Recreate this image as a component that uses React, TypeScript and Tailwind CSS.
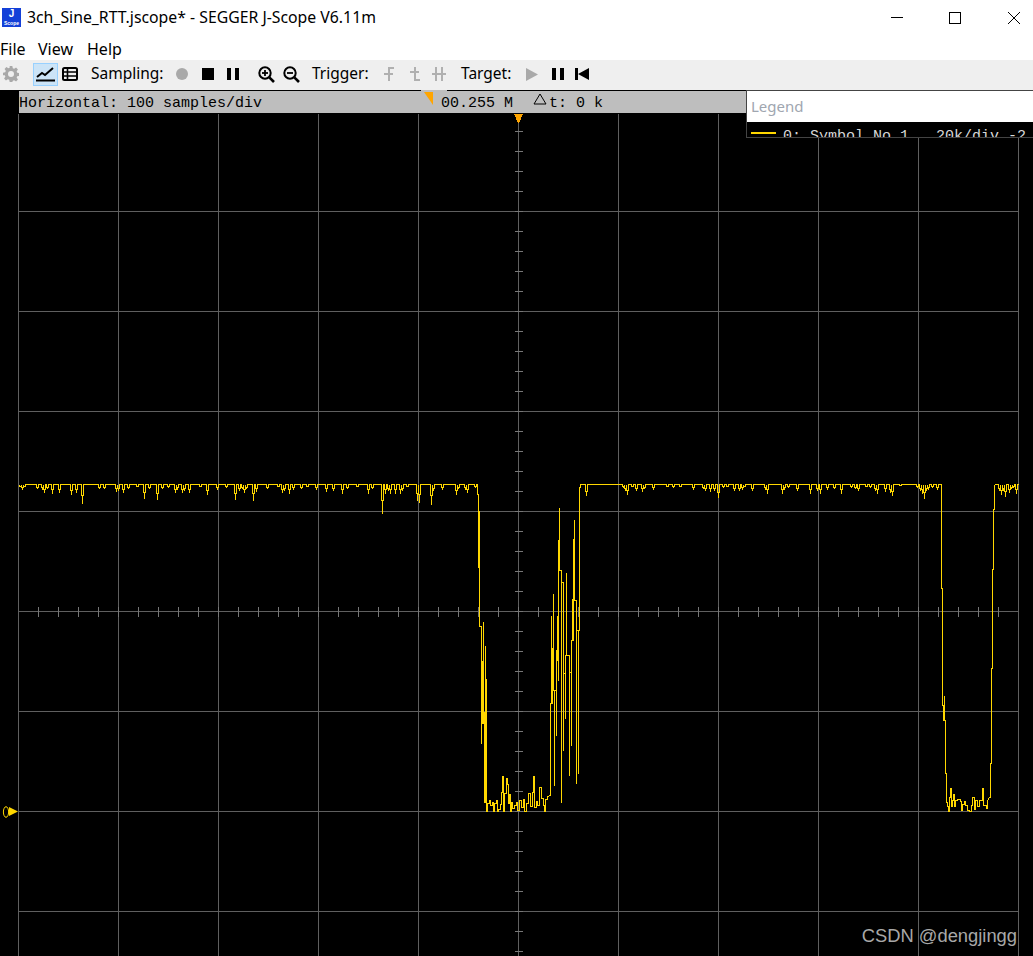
import React from 'react'

type Pt = [number, number]

const BASE = 484

// [x, y] of the small dips along the flat part of the trace
const dipsLeft: Pt[] = [
  [20, 486], [22, 489], [24, 486], [37, 488], [42, 489], [44, 492], [47, 488], [52, 493], [59, 492],
  [71, 494], [76, 492], [82, 503], [99, 488], [104, 488], [116, 491], [118, 490], [123, 492], [128, 488],
  [137, 486], [144, 498], [149, 488], [157, 499], [162, 488], [168, 487], [175, 492], [177, 489], [182, 492],
  [184, 490], [189, 492], [200, 486], [207, 494], [217, 489], [226, 487], [235, 499], [239, 490], [242, 488],
  [244, 492], [246, 488], [253, 500], [256, 491], [267, 488], [278, 486], [282, 492], [284, 490], [289, 493],
  [293, 489], [301, 488], [307, 486], [316, 489], [326, 491], [333, 490], [342, 493], [347, 488], [357, 486],
  [368, 493], [372, 488], [382, 513], [385, 493], [388, 490], [390, 493], [395, 493], [400, 493], [402, 490],
  [407, 486], [417, 500], [419, 502], [431, 504], [433, 490], [442, 489], [456, 494], [458, 488], [465, 489],
  [467, 492], [475, 487],
]

const dipsMiddle: Pt[] = [
  [586, 495], [623, 487], [625, 490], [627, 494], [632, 486], [636, 490], [642, 491], [644, 488], [653, 489],
  [667, 486], [673, 487], [680, 486], [693, 489], [703, 488], [705, 490], [710, 491], [714, 490], [718, 497],
  [723, 487], [727, 486], [734, 490], [739, 490], [742, 489], [744, 486], [752, 490], [765, 489], [767, 493],
  [782, 493], [784, 489], [788, 487], [797, 490], [810, 493], [817, 490], [820, 493], [827, 489], [834, 488],
  [841, 493], [851, 487], [855, 488], [858, 490], [866, 486], [870, 487], [875, 490], [877, 493], [885, 491],
  [890, 492], [892, 495], [900, 485], [917, 487], [920, 490], [922, 493], [924, 498], [926, 490], [928, 489],
  [932, 487], [937, 489],
]

const dipsRight: Pt[] = [
  [999, 490], [1001, 494], [1003, 490], [1005, 496], [1009, 492], [1011, 488], [1013, 487], [1016, 493],
]

// each dip is a small step down, with a one pixel spike at its deepest point
const flat = (from: number, to: number, dips: Pt[]): Pt[] => {
  const pts: Pt[] = [[from, BASE]]
  dips.forEach(([x, y]) => {
    const mid = BASE + Math.ceil((y - BASE) * 0.55)
    pts.push([x - 1, BASE], [x - 1, mid], [x, mid], [x, y], [x, mid], [x + 1, mid], [x + 1, BASE])
  })
  pts.push([to, BASE])
  return pts
}

// first drop, noisy floor and the burst on the way back up
const burst: Pt[] = [
  [477, 484], [477, 494], [478, 494], [478, 567], [479, 567], [479, 510], [479, 626], [481, 626], [481, 743],
  [481, 661], [482, 661], [482, 723], [483, 723], [483, 621], [483, 712], [484, 712], [484, 802], [485, 802],
  [485, 645], [485, 775], [486, 775], [486, 678], [486, 811], [487, 811], [487, 803], [488, 803], [489, 803],
  [489, 800], [490, 800], [490, 805], [492, 805], [492, 802], [493, 802], [493, 811], [494, 811], [494, 803],
  [496, 803], [496, 800], [497, 800], [497, 811], [498, 811], [498, 809], [500, 809], [500, 804], [501, 804],
  [501, 792], [502, 792], [502, 776], [503, 776], [503, 811], [504, 811], [504, 793], [506, 793], [506, 778],
  [507, 778], [507, 784], [508, 784], [508, 803], [509, 803], [509, 794], [510, 794], [510, 811], [511, 811],
  [511, 802], [512, 802], [512, 808], [514, 808], [514, 805], [516, 805], [516, 802], [517, 802], [517, 810],
  [519, 810], [519, 800], [521, 800], [521, 807], [523, 807], [523, 799], [524, 799], [524, 811], [526, 811],
  [526, 803], [528, 803], [528, 793], [530, 793], [530, 806], [532, 806], [532, 792], [533, 792], [533, 776],
  [534, 776], [534, 807], [536, 807], [536, 801], [537, 801], [537, 805], [539, 805], [539, 787], [541, 787],
  [541, 798], [543, 798], [543, 805], [544, 805], [544, 811], [545, 811], [545, 799], [547, 799], [547, 796],
  [550, 795], [550, 703], [551, 703], [551, 615], [551, 703], [552, 703], [552, 648], [553, 648], [553, 593],
  [553, 690], [554, 690], [554, 785], [554, 690], [556, 690], [556, 735], [556, 650], [557, 650], [557, 615],
  [557, 660], [558, 660], [558, 539], [558, 680], [558, 570], [559, 570], [559, 507], [559, 570], [561, 570],
  [561, 802], [561, 582], [563, 582], [563, 750], [563, 673], [565, 673], [565, 718], [565, 655], [566, 655],
  [566, 572], [566, 655], [569, 655], [569, 775], [569, 672], [571, 672], [571, 745], [571, 640], [572, 640],
  [572, 598], [572, 640], [573, 640], [573, 538], [573, 600], [574, 600], [574, 519], [574, 600], [576, 600],
  [576, 783], [576, 630], [578, 630], [578, 773], [578, 630], [579, 630], [579, 487], [580, 487], [580, 484],
]

// second drop with the floor between 947 and 990
const secondDrop: Pt[] = [
  [941, 484], [941, 588], [942, 588], [942, 705], [943, 705], [943, 720], [944, 720], [944, 695], [944, 720],
  [945, 720], [945, 773], [946, 773], [946, 802], [947, 802], [947, 806], [948, 806], [948, 811], [949, 811],
  [949, 797], [950, 797], [950, 788], [951, 788], [951, 806], [952, 806], [952, 800], [953, 800], [953, 794],
  [954, 794], [954, 806], [955, 806], [955, 800], [957, 800], [957, 799], [960, 799], [960, 801], [961, 801],
  [961, 810], [962, 810], [962, 804], [964, 804], [964, 801], [965, 801], [965, 805], [967, 805], [967, 810],
  [969, 810], [969, 811], [971, 811], [971, 805], [972, 805], [972, 797], [974, 797], [974, 809], [975, 809],
  [975, 800], [977, 800], [977, 806], [979, 806], [979, 800], [982, 800], [982, 788], [983, 788], [983, 805],
  [986, 805], [986, 808], [987, 808], [987, 800], [989, 797], [990, 797], [990, 763], [991, 763], [991, 668],
  [992, 668], [992, 569], [993, 569], [993, 509], [994, 509], [994, 485], [995, 484],
]

const trace: Pt[] = [
  ...flat(19, 477, dipsLeft),
  ...burst,
  ...flat(581, 941, dipsMiddle),
  ...secondDrop,
  ...flat(996, 1018, dipsRight),
]

const gridX = [18, 118, 218, 318, 418, 518, 618, 718, 818, 918, 1018]
const gridY = [211, 311, 411, 511, 611, 711, 811, 911]
const ticksX = Array.from({ length: 49 }, (_, i) => 38 + i * 20)
const ticksY = Array.from({ length: 42 }, (_, i) => 131 + i * 20)

function ScopeChart() {
  return (
    <svg className="absolute inset-0 w-full h-full" viewBox="0 90 1033 866" shapeRendering="crispEdges">
      <g transform="translate(0.5 0.5)" fill="none">
        <line x1={518} y1={118} x2={518} y2={956} stroke="#ffa500" />
        {gridX.map((x) => (
          <line key={x} x1={x} y1={113} x2={x} y2={956} stroke="#5f5f5f" />
        ))}
        {gridY.map((y) => (
          <line key={y} x1={18} y1={y} x2={1018} y2={y} stroke="#5f5f5f" />
        ))}
        {ticksX.map((x) => (
          <line key={x} x1={x} y1={606} x2={x} y2={616} stroke="#777777" />
        ))}
        {ticksY.map((y) => (
          <line key={y} x1={514} y1={y} x2={522} y2={y} stroke="#777777" />
        ))}
        <polyline points={trace.map((p) => p.join(',')).join(' ')} stroke="#ffd700" strokeLinejoin="miter" />
      </g>
      <polygon points="514,114 523,114 519,123 518,123" fill="#ffa500" />
      {/* channel 0 marker */}
      <ellipse cx={6} cy={812} rx={2.6} ry={5.3} fill="none" stroke="#ffd700" shapeRendering="auto" />
      <polygon points="9,807 18,811.5 9,816" fill="#ffd700" shapeRendering="auto" />
    </svg>
  )
}

function Gear() {
  return (
    <svg width="16" height="16" viewBox="0 0 24 24" fill="#a9a9a9">
      <path
        fillRule="evenodd"
        d="M10 0h4l.7 3.4 2 .8L19.6 2.3l2.8 2.8-1.9 2.9.8 2 3.4.7v4l-3.4.7-.8 2 1.9 2.9-2.8 2.8-2.9-1.9-2 .8L14 24h-4l-.7-3.4-2-.8-2.9 1.9-2.8-2.8 1.9-2.9-.8-2L0 14v-4l3.4-.7.8-2-1.9-2.9 2.8-2.8 2.9 1.9 2-.8L10 0zm2 7.5a4.5 4.5 0 100 9 4.5 4.5 0 000-9z"
      />
    </svg>
  )
}

function Magnifier({ plus }: { plus: boolean }) {
  return (
    <svg width="17" height="17" viewBox="0 0 17 17" fill="none" stroke="#000">
      <circle cx="7" cy="7" r="5.7" strokeWidth="2" />
      <path d="M11.3 11.3L16 16" strokeWidth="2.6" />
      <path d="M4 7h6" strokeWidth="1.8" />
      {plus && <path d="M7 4v6" strokeWidth="1.8" />}
    </svg>
  )
}

function TriggerIcon({ d }: { d: string }) {
  return (
    <svg width="14" height="16" viewBox="0 0 14 16" fill="none" stroke="#b0b0b0" strokeWidth="2" shapeRendering="crispEdges">
      <path d={d} />
    </svg>
  )
}

export default function App() {
  return (
    <div className="h-screen w-full flex flex-col overflow-hidden bg-white text-black font-['Noto_Sans',sans-serif]">
      {/* Title bar */}
      <div className="h-10 shrink-0 flex items-center pl-[2px] pb-[5px]">
        <div className="w-[19px] h-[19px] bg-[#1440d8] flex flex-col items-center text-white leading-none shrink-0">
          <span className="text-[10px] font-bold font-['Liberation_Sans',sans-serif] mt-[1px]">J</span>
          <span className="text-[5px] font-bold font-['Liberation_Sans',sans-serif] mt-[2px]">Scope</span>
        </div>
        <span className="ml-[6px] text-[15.8px] whitespace-nowrap">3ch_Sine_RTT.jscope* - SEGGER J-Scope V6.11m</span>
        <div className="ml-auto flex items-center shrink-0 pr-[13px]">
          <svg width="129" height="14" viewBox="0 0 129 14" fill="none" stroke="#000" shapeRendering="crispEdges">
            <path d="M0 6.5h12" />
            <rect x="58.5" y="1.5" width="11" height="11" />
            <path d="M117 1l12 12M129 1l-12 12" shapeRendering="auto" />
          </svg>
        </div>
      </div>

      {/* Menu bar */}
      <div className="h-5 shrink-0 flex items-center pb-[2px] text-[16px] leading-5">
        <span className="w-[38px]">File</span>
        <span className="w-[49px]">View</span>
        <span>Help</span>
      </div>

      {/* Toolbar */}
      <div className="h-[30px] shrink-0 bg-[#efefef] flex items-center pl-[3px] pb-[2px] text-[15.5px]">
        <Gear />
        <div className="ml-[14px] w-[25px] h-[23px] bg-[#cce4f7] border border-[#99d1ff] flex items-center justify-center">
          <svg width="19" height="16" viewBox="0 0 19 16" fill="none" stroke="#000">
            <path d="M1 11l5-4 3 2 8-7" strokeWidth="2" />
            <path d="M0 14.5h19" strokeWidth="2" />
          </svg>
        </div>
        <svg className="ml-[4px]" width="16" height="14" viewBox="0 0 16 14" fill="none" stroke="#000">
          <rect x="1" y="1" width="14" height="12" rx="1.5" strokeWidth="2" />
          <path d="M1 5h14M1 9h14M5.5 1v12" strokeWidth="1.6" />
        </svg>
        <span className="ml-[13px] w-[72px] whitespace-nowrap">Sampling:</span>
        <div className="ml-[13px] w-3 h-3 rounded-full bg-[#a9a9a9]" />
        <div className="ml-[14px] w-3 h-3 bg-black" />
        <div className="ml-[13px] w-3 h-3 flex justify-between">
          <div className="w-1 bg-black" />
          <div className="w-1 bg-black" />
        </div>
        <div className="ml-[19px]"><Magnifier plus /></div>
        <div className="ml-2"><Magnifier plus={false} /></div>
        <span className="ml-3 w-[58px] whitespace-nowrap">Trigger:</span>
        <div className="ml-3"><TriggerIcon d="M7 15V2h5M2 8h9" /></div>
        <div className="ml-3"><TriggerIcon d="M7 1v13h5M2 6h9" /></div>
        <div className="ml-[10px]"><TriggerIcon d="M4 1v14M10 1v14M0 8h14" /></div>
        <span className="ml-[15px] w-[52px] whitespace-nowrap">Target:</span>
        <svg className="ml-[13px]" width="12" height="13" viewBox="0 0 12 13"><path d="M0 0l12 6.5L0 13z" fill="#a9a9a9" /></svg>
        <div className="ml-[14px] w-3 h-3 flex justify-between">
          <div className="w-1 bg-black" />
          <div className="w-1 bg-black" />
        </div>
        <svg className="ml-[11px]" width="14" height="12" viewBox="0 0 14 12"><path d="M0 0h3v12H0zM14 0v12L3 6z" fill="#000" /></svg>
      </div>

      {/* Scope area */}
      <div className="relative flex-1 bg-black">
        <ScopeChart />

        <div className="absolute top-0 left-[421px] w-[26px] h-px bg-[#bebebe]" />
        <div className="absolute top-px left-[19px] w-[728px] h-[22px] bg-[#bebebe] flex items-center pt-[2px] text-[15px] leading-none whitespace-pre font-['Liberation_Mono',monospace]">
          <span className="w-[405px]">Horizontal: 100 samples/div</span>
          <svg className="-mt-[11px]" width="10" height="14" viewBox="0 0 10 14"><path d="M0 1h9v13z" fill="#ffa500" /></svg>
          <span className="ml-[7px] w-[92px]">00.255 M</span>
          <svg className="-mt-[8px]" width="14" height="12" viewBox="0 0 14 12" fill="none" stroke="#000"><path d="M7 1L1 11h12z" /></svg>
          <span className="ml-[2px]">t: 0 k</span>
        </div>

        {/* Legend panel, cut off by its small height */}
        <div className="absolute top-0 left-[746px] right-0 h-[48px] border-t border-l border-b border-[#444444] bg-black overflow-hidden">
          <div className="h-[31px] bg-white pl-[4px] flex items-center text-[15px] text-[#a0a6b0]">Legend</div>
          <div className="h-4 flex text-[15px] leading-[15px] whitespace-pre text-[#d8d8d8] font-['Liberation_Mono',monospace]">
            <div className="ml-[4px] mt-[10px] w-[25px] h-[2px] bg-[#ffd700]" />
            <span className="ml-[7px] mt-[7px]">0: Symbol No 1   20k/div -2</span>
          </div>
        </div>

        <span className="absolute right-[16px] bottom-[8px] text-[18.35px] leading-6 text-[#a8a8a8] font-['Liberation_Sans',sans-serif]">CSDN @dengjingg</span>
      </div>
    </div>
  )
}
